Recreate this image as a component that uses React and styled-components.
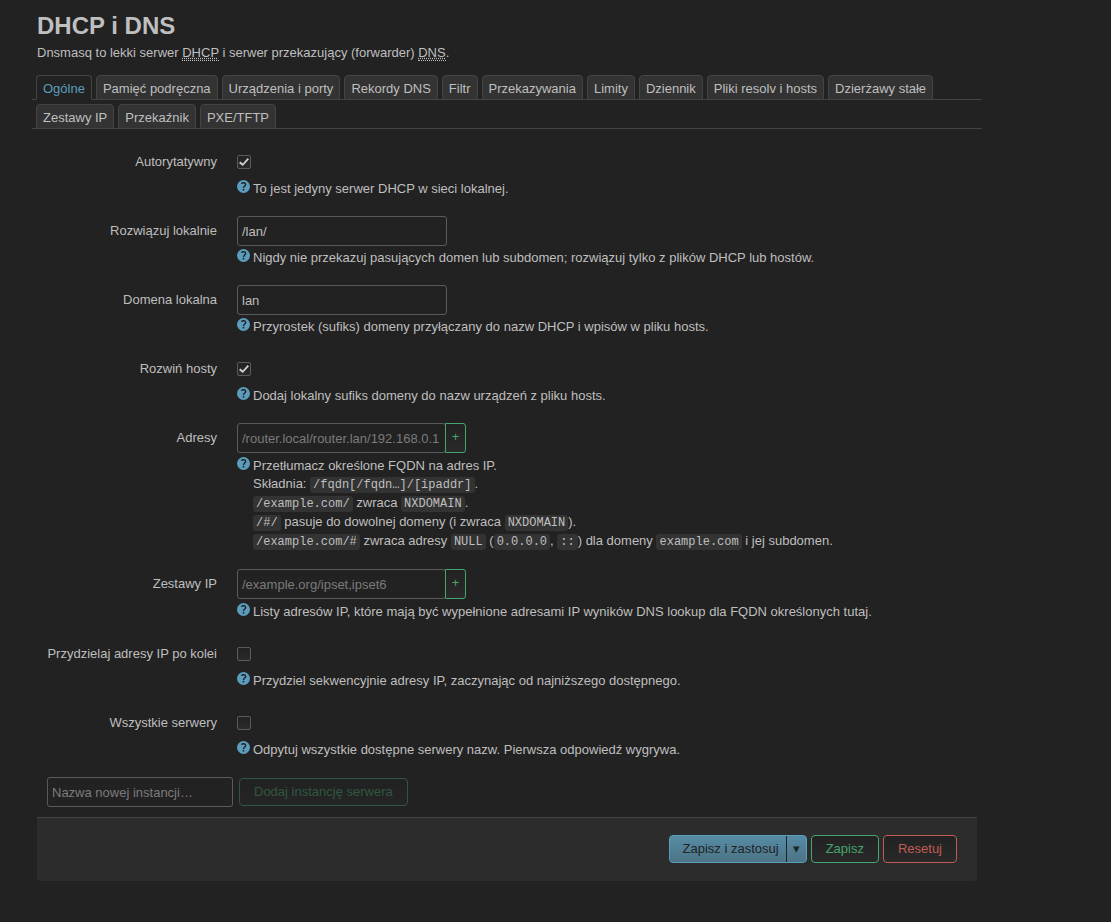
import { useState } from 'react';
import styled, { createGlobalStyle, css, ThemeProvider } from 'styled-components';

const theme = {
	colors: {
		background: '#222222',
		panel: '#2c2c2c',
		raised: '#333333',
		text: '#bfbfbf',
		placeholder: '#7b7b7b',
		line: '#444444',
		inputBorder: '#5b5b5b',
		primary: '#5b9dbd',
		success: '#46a56e',
		error: '#c05c52',
	},
};

const GlobalStyle = createGlobalStyle`
	* {
		box-sizing: border-box;
	}
	body {
		margin: 0;
		background: ${theme.colors.background};
		color: ${theme.colors.text};
		font-family: 'Liberation Sans', Arial, sans-serif;
		font-size: 13px;
		line-height: 18px;
	}
	button,
	input {
		font: inherit;
	}
`;

const StyledPage = styled.main`
	max-width: 940px;
	margin: 8px 37px 40px;
`;

const StyledTitle = styled.h2`
	margin: 0;
	font-size: 24px;
	line-height: 36px;
`;

const StyledIntro = styled.p`
	margin: 0 0 13px;
`;

const StyledAbbr = styled.abbr`
	border-bottom: 1px dotted currentColor;
	text-decoration: underline dotted;
`;

const StyledTabs = styled.nav`
	display: flex;
	flex-wrap: wrap;
	gap: 4px;
	margin: 0 -5px 18px;
	padding: 0 4px;
	background: repeating-linear-gradient(
		transparent 0 24px,
		${({ theme }) => theme.colors.line} 24px 25px,
		transparent 25px 29px
	);
`;

const StyledTab = styled.a`
	height: 25px;
	padding: 0 6px;
	border: 1px solid ${({ theme }) => theme.colors.line};
	border-radius: 4px 4px 0 0;
	background: ${({ theme }) => theme.colors.raised};
	color: inherit;
	line-height: 25px;
	text-decoration: none;
	${({ $active, theme }) =>
		$active &&
		css`
			border-bottom-color: ${theme.colors.background};
			background: ${theme.colors.background};
			color: ${theme.colors.primary};
		`}
`;

const StyledRow = styled.div`
	display: flex;
	gap: 20px;
	margin-bottom: 18px;
`;

const StyledLabel = styled.label`
	flex: 0 0 180px;
	padding-top: 6px;
	text-align: right;
`;

const StyledField = styled.div`
	flex: 1;
	min-width: 0;
`;

const StyledInput = styled.input`
	display: block;
	width: ${({ $width }) => $width || '210px'};
	height: 30px;
	padding: 1px 4px 0;
	border: 1px solid ${({ theme }) => theme.colors.inputBorder};
	border-radius: 3px;
	outline: none;
	background: transparent;
	color: inherit;
	&::placeholder {
		color: ${({ theme }) => theme.colors.placeholder};
		opacity: 1;
	}
`;

const StyledCheckbox = styled.input`
	appearance: none;
	display: grid;
	place-content: center;
	width: 14px;
	height: 14px;
	margin: 8px 0;
	border: 1px solid ${({ theme }) => theme.colors.inputBorder};
	border-radius: 2px;
	background: linear-gradient(#222222, #2b2b2b);
	&:checked::before {
		content: '';
		width: 10px;
		height: 8px;
		background: #d0d0d0;
		clip-path: polygon(14% 44%, 0 62%, 38% 100%, 100% 16%, 86% 0, 38% 68%);
	}
`;

const StyledDynamicList = styled.div`
	display: flex;
	width: 229px;
	margin-bottom: 1px;
`;

const StyledAddItem = styled.button`
	flex: 0 0 21px;
	margin-left: -1px;
	padding: 0 0 3px;
	border: 1px solid ${({ theme }) => theme.colors.success};
	border-radius: 0 3px 3px 0;
	background: linear-gradient(#222222, #2a2a2a);
	color: ${({ theme }) => theme.colors.success};
`;

const StyledDescription = styled.div`
	display: flex;
	gap: 3px;
	padding-top: 3px;
`;

const StyledHelpIcon = styled.svg`
	flex: none;
	width: 13px;
	height: 13px;
`;

const StyledCode = styled.code`
	padding: 1px 3px;
	border-radius: 3px;
	background: ${({ theme }) => theme.colors.raised};
	font-family: 'Liberation Mono', monospace;
	font-size: 12px;
`;

const StyledCreate = styled.div`
	display: flex;
	align-items: center;
	gap: 6px;
	padding: 0 10px 10px;
`;

const StyledButton = styled.button`
	height: 28px;
	padding: 0 14px 1px;
	border: 1px solid ${({ theme, $tone }) => theme.colors[$tone]};
	border-radius: 4px;
	background: linear-gradient(#222222, #292929);
	color: ${({ theme, $tone }) => theme.colors[$tone]};
	&:disabled {
		opacity: 0.4;
	}
`;

const StyledActions = styled.div`
	display: flex;
	justify-content: flex-end;
	gap: 4px;
	padding: 17px 20px 18px;
	border-top: 1px solid ${({ theme }) => theme.colors.line};
	border-radius: 0 0 3px 3px;
	background: ${({ theme }) => theme.colors.panel};
`;

const StyledSplitButton = styled.div`
	display: flex;
	height: 28px;
	border: 1px solid ${({ theme }) => theme.colors.primary};
	border-radius: 4px;
	background: linear-gradient(#568ba5, #4c7486);
`;

const StyledSplitPart = styled.button`
	padding: ${({ $menu }) => ($menu ? '0 6px 1px' : '0 7px 1px 13px')};
	border: 0;
	border-left: ${({ $menu }) => ($menu ? '1px solid #222222' : '0')};
	background: transparent;
	color: #222222;
`;

const tabs = [
	'Ogólne',
	'Pamięć podręczna',
	'Urządzenia i porty',
	'Rekordy DNS',
	'Filtr',
	'Przekazywania',
	'Limity',
	'Dziennik',
	'Pliki resolv i hosts',
	'Dzierżawy stałe',
	'Zestawy IP',
	'Przekaźnik',
	'PXE/TFTP',
];

const HelpIcon = () => (
	<StyledHelpIcon viewBox="0 0 13 13" aria-hidden="true">
		<circle cx="6.5" cy="6.5" r="6.5" fill={theme.colors.primary} />
		<path
			d="M4.5 3.7C5.1 2.3 8.7 2.2 8.7 4.4C8.7 6 6.5 6 6.5 8"
			fill="none"
			stroke="#222222"
			strokeWidth="1.4"
		/>
		<rect x="5.7" y="8.9" width="1.6" height="1.6" fill="#222222" />
	</StyledHelpIcon>
);

const Row = ({ id, label, description, children }) => (
	<StyledRow>
		<StyledLabel htmlFor={id}>{label}</StyledLabel>
		<StyledField>
			{children}
			<StyledDescription>
				<HelpIcon />
				<div>{description}</div>
			</StyledDescription>
		</StyledField>
	</StyledRow>
);

const CheckboxRow = ({ id, checked, ...rest }) => (
	<Row id={id} {...rest}>
		<StyledCheckbox id={id} type="checkbox" defaultChecked={checked} />
	</Row>
);

const TextRow = ({ id, value, ...rest }) => (
	<Row id={id} {...rest}>
		<StyledInput id={id} type="text" defaultValue={value} />
	</Row>
);

const ListRow = ({ id, placeholder, ...rest }) => (
	<Row id={id} {...rest}>
		<StyledDynamicList>
			<StyledInput id={id} type="text" placeholder={placeholder} $width="209px" />
			<StyledAddItem type="button">+</StyledAddItem>
		</StyledDynamicList>
	</Row>
);

const AddressHelp = () => (
	<>
		Przetłumacz określone FQDN na adres IP.
		<br />
		Składnia: <StyledCode>/fqdn[/fqdn…]/[ipaddr]</StyledCode>.
		<br />
		<StyledCode>/example.com/</StyledCode> zwraca <StyledCode>NXDOMAIN</StyledCode>.
		<br />
		<StyledCode>/#/</StyledCode> pasuje do dowolnej domeny (i zwraca <StyledCode>NXDOMAIN</StyledCode>).
		<br />
		<StyledCode>/example.com/#</StyledCode> zwraca adresy <StyledCode>NULL</StyledCode> (
		<StyledCode>0.0.0.0</StyledCode>, <StyledCode>::</StyledCode>) dla domeny{' '}
		<StyledCode>example.com</StyledCode> i jej subdomen.
	</>
);

const App = () => {
	const [activeTab, setActiveTab] = useState(tabs[0]);
	const [instance, setInstance] = useState('');

	return (
		<ThemeProvider theme={theme}>
			<GlobalStyle />
			<StyledPage>
				<StyledTitle>DHCP i DNS</StyledTitle>
				<StyledIntro>
					Dnsmasq to lekki serwer <StyledAbbr>DHCP</StyledAbbr> i serwer przekazujący (forwarder){' '}
					<StyledAbbr>DNS</StyledAbbr>.
				</StyledIntro>
				<StyledTabs>
					{tabs.map(tab => (
						<StyledTab key={tab} href="#" $active={tab === activeTab} onClick={() => setActiveTab(tab)}>
							{tab}
						</StyledTab>
					))}
				</StyledTabs>
				<form onSubmit={event => event.preventDefault()}>
					<CheckboxRow
						id="authoritative"
						label="Autorytatywny"
						checked
						description="To jest jedyny serwer DHCP w sieci lokalnej."
					/>
					<TextRow
						id="local"
						label="Rozwiązuj lokalnie"
						value="/lan/"
						description="Nigdy nie przekazuj pasujących domen lub subdomen; rozwiązuj tylko z plików DHCP lub hostów."
					/>
					<TextRow
						id="domain"
						label="Domena lokalna"
						value="lan"
						description="Przyrostek (sufiks) domeny przyłączany do nazw DHCP i wpisów w pliku hosts."
					/>
					<CheckboxRow
						id="expandhosts"
						label="Rozwiń hosty"
						checked
						description="Dodaj lokalny sufiks domeny do nazw urządzeń z pliku hosts."
					/>
					<ListRow
						id="address"
						label="Adresy"
						placeholder="/router.local/router.lan/192.168.0.1"
						description={<AddressHelp />}
					/>
					<ListRow
						id="ipset"
						label="Zestawy IP"
						placeholder="/example.org/ipset,ipset6"
						description="Listy adresów IP, które mają być wypełnione adresami IP wyników DNS lookup dla FQDN określonych tutaj."
					/>
					<CheckboxRow
						id="sequential"
						label="Przydzielaj adresy IP po kolei"
						description="Przydziel sekwencyjnie adresy IP, zaczynając od najniższego dostępnego."
					/>
					<CheckboxRow
						id="allservers"
						label="Wszystkie serwery"
						description="Odpytuj wszystkie dostępne serwery nazw. Pierwsza odpowiedź wygrywa."
					/>
					<StyledCreate>
						<StyledInput
							type="text"
							aria-label="Nazwa nowej instancji…"
							placeholder="Nazwa nowej instancji…"
							value={instance}
							onChange={event => setInstance(event.target.value)}
							$width="186px"
						/>
						<StyledButton type="button" $tone="success" disabled={!instance}>
							Dodaj instancję serwera
						</StyledButton>
					</StyledCreate>
					<StyledActions>
						<StyledSplitButton>
							<StyledSplitPart type="submit">Zapisz i zastosuj</StyledSplitPart>
							<StyledSplitPart type="button" $menu>
								▾
							</StyledSplitPart>
						</StyledSplitButton>
						<StyledButton type="submit" $tone="success">
							Zapisz
						</StyledButton>
						<StyledButton type="reset" $tone="error">
							Resetuj
						</StyledButton>
					</StyledActions>
				</form>
			</StyledPage>
		</ThemeProvider>
	);
};

export default App;
